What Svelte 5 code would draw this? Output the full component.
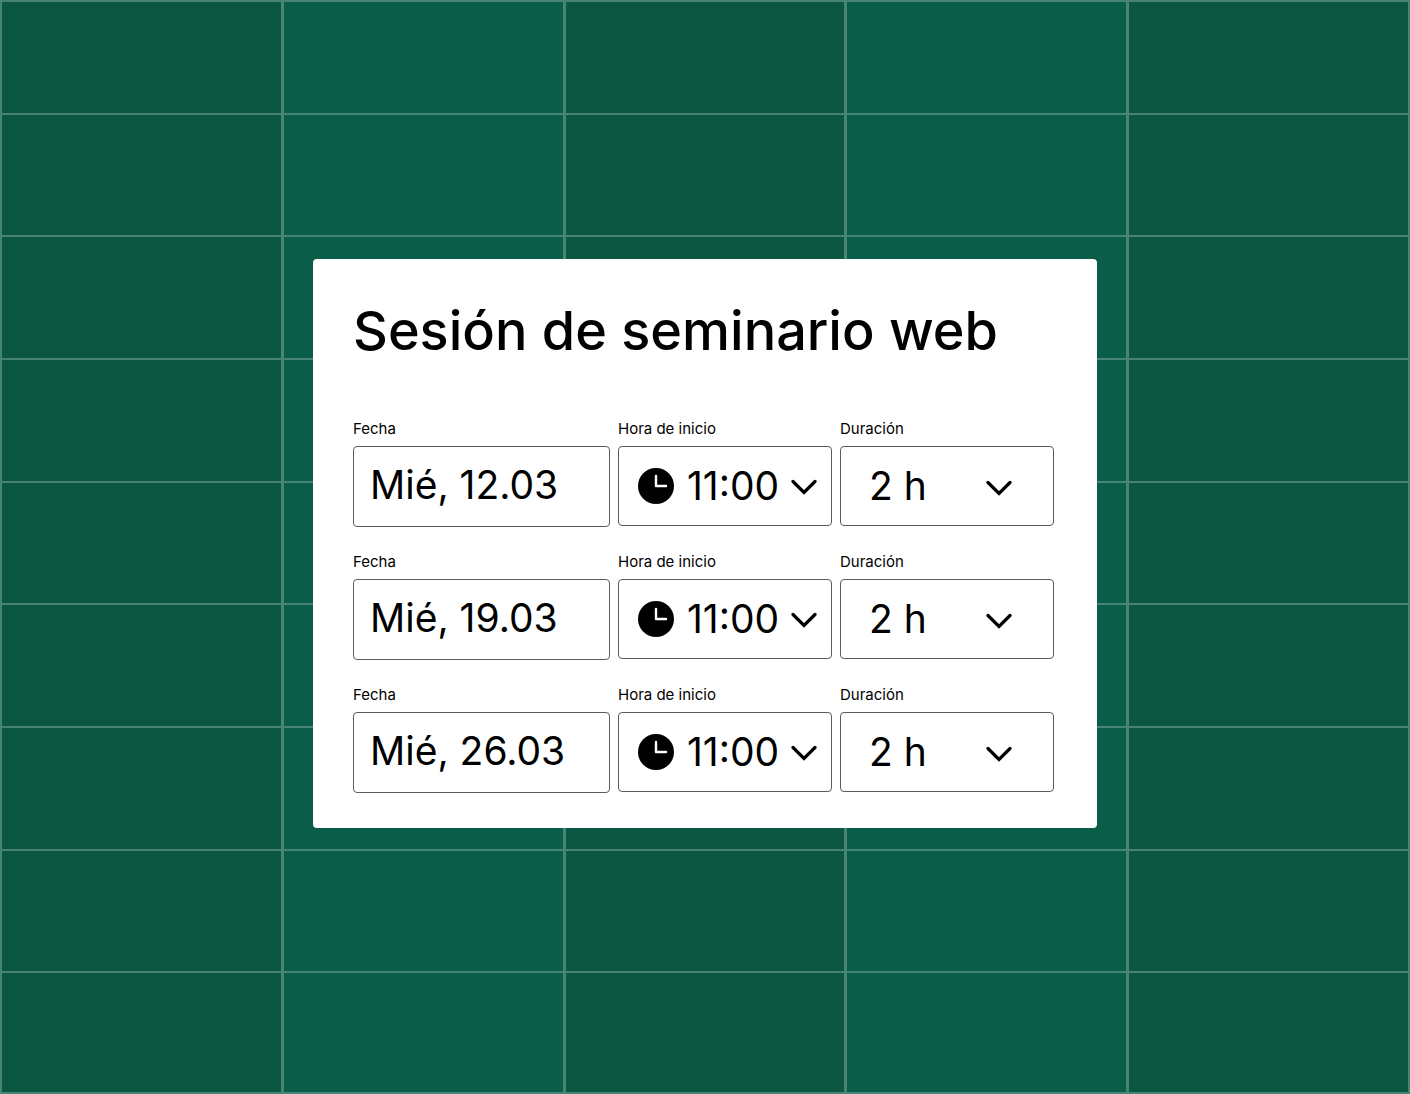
<script>
  let sessions = $state([
    { id: 1, date: 'Mié, 12.03', start: '11:00', duration: '2 h' },
    { id: 2, date: 'Mié, 19.03', start: '11:00', duration: '2 h' },
    { id: 3, date: 'Mié, 26.03', start: '11:00', duration: '2 h' }
  ]);
  const starts = ['10:00', '11:00', '12:00'];
  const durations = ['1 h', '2 h', '3 h'];
  const cells = Array.from({ length: 45 }, (_, i) => i);
</script>

{#snippet chevron()}
  <svg class="chevron" viewBox="0 0 26 16" aria-hidden="true">
    <path d="M2 2.5 L13 13.5 L24 2.5" fill="none" stroke="currentColor" stroke-width="3.2" stroke-linecap="round" />
  </svg>
{/snippet}

<main class="page">
  <div class="calendar" aria-hidden="true">
    {#each cells as cell (cell)}
      <div class="cell"></div>
    {/each}
  </div>

  <form class="card">
    <h1>Sesión de seminario web</h1>
    <div class="sessions">
      {#each sessions as session (session.id)}
        <div class="session">
          <div class="field">
            <label for="date-{session.id}">Fecha</label>
            <input id="date-{session.id}" class="control date" type="text" bind:value={session.date} />
          </div>
          <div class="field">
            <label for="start-{session.id}">Hora de inicio</label>
            <div class="picker time">
              <select id="start-{session.id}" class="control" bind:value={session.start}>
                {#each starts as option (option)}
                  <option value={option}>{option}</option>
                {/each}
              </select>
              <svg class="clock" viewBox="0 0 36 36" aria-hidden="true">
                <circle cx="18" cy="18" r="18" />
                <path d="M18 8 V18 H28" fill="none" stroke="#fff" stroke-width="2.4" stroke-linecap="round" stroke-linejoin="round" />
              </svg>
              {@render chevron()}
            </div>
          </div>
          <div class="field">
            <label for="duration-{session.id}">Duración</label>
            <div class="picker duration">
              <select id="duration-{session.id}" class="control" bind:value={session.duration}>
                {#each durations as option (option)}
                  <option value={option}>{option}</option>
                {/each}
              </select>
              {@render chevron()}
            </div>
          </div>
        </div>
      {/each}
    </div>
  </form>
</main>

<style>
  :global(body) {
    margin: 0;
  }
  .page,
  .page * {
    box-sizing: border-box;
  }
  .page {
    display: grid;
    grid-template: minmax(100vh, auto) / 1fr;
    font-family: Inter, 'Liberation Sans', sans-serif;
    color: #000;
  }
  .calendar {
    grid-area: 1 / 1;
    display: grid;
    grid-template-columns: repeat(5, 1fr);
    grid-template-rows: 111fr repeat(7, 121fr) 119fr;
    column-gap: 3px;
    row-gap: 2px;
    padding: 2px;
    background: #488473;
  }
  .cell {
    background: #0c5742;
  }
  .cell:nth-child(5n + 2),
  .cell:nth-child(5n + 4) {
    background: #0a5e49;
  }
  .card {
    grid-area: 1 / 1;
    place-self: center;
    width: 100%;
    max-width: 784px;
    margin-bottom: 7px;
    padding: 40px 43px 35px 40px;
    border-radius: 4px;
    background: #fff;
  }
  h1 {
    margin: 0 0 56px;
    font-size: 54px;
    font-weight: 500;
    line-height: 64px;
  }
  .sessions {
    display: grid;
    gap: 25px;
  }
  .session {
    display: grid;
    grid-template-columns: 257fr 214fr 214fr;
    align-items: start;
    gap: 8px;
  }
  .field {
    display: grid;
    gap: 7px;
    min-width: 0;
  }
  label {
    font-size: 15px;
    line-height: 20px;
  }
  .control {
    width: 100%;
    height: 80px;
    margin: 0;
    border: 1px solid #5c5c5f;
    border-radius: 4px;
    background: #fff;
    color: inherit;
    font-family: inherit;
    font-size: 39px;
    appearance: none;
  }
  .date {
    height: 81px;
    padding: 0 16px 4px;
  }
  .picker {
    display: grid;
    align-items: center;
  }
  .picker > * {
    grid-area: 1 / 1;
  }
  .time .control {
    padding: 0 40px 2px 68px;
  }
  .duration .control {
    padding: 0 64px 2px 28px;
  }
  .clock {
    width: 36px;
    height: 36px;
    margin-left: 20px;
    pointer-events: none;
  }
  .chevron {
    justify-self: end;
    width: 26px;
    height: 16px;
    margin: 2px 15px 0 0;
    pointer-events: none;
  }
  .duration .chevron {
    margin: 4px 42px 0 0;
  }
</style>
